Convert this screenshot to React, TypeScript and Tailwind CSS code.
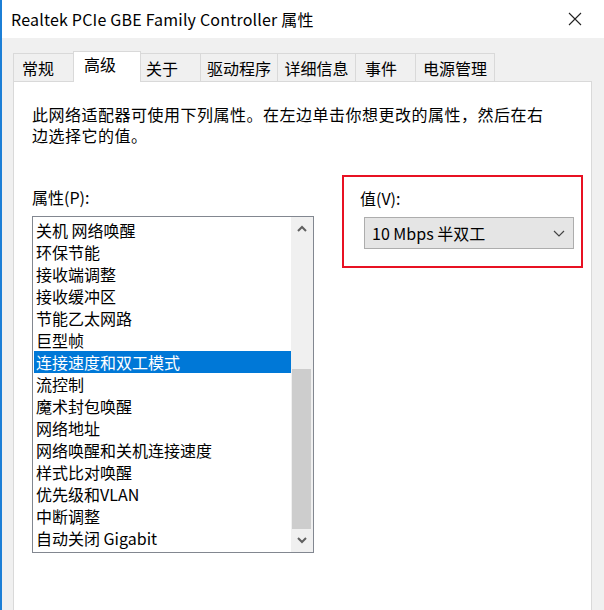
import React from "react";

const items = [
  "关机 网络唤醒",
  "环保节能",
  "接收端调整",
  "接收缓冲区",
  "节能乙太网路",
  "巨型帧",
  "连接速度和双工模式",
  "流控制",
  "魔术封包唤醒",
  "网络地址",
  "网络唤醒和关机连接速度",
  "样式比对唤醒",
  "优先级和VLAN",
  "中断调整",
  "自动关闭 Gigabit",
];

const tabs = [
  { label: "常规", cls: "w-[61px] justify-start pl-[8px]" },
  { label: "高级", cls: "w-[68px] justify-start pl-[10px]", active: true },
  { label: "关于", cls: "w-[61px] justify-start pl-[5px]" },
  { label: "驱动程序", cls: "w-[78px] justify-center" },
  { label: "详细信息", cls: "w-[79px] justify-center" },
  { label: "事件", cls: "w-[61px] justify-start pl-[9px]" },
  { label: "电源管理", cls: "w-[80px] justify-center" },
];

export default function App() {
  return (
    <div
      className="w-[604px] h-[610px] overflow-hidden bg-[#f0f0f0] border-l-2 border-[#1c7fd6] flex flex-col text-black"
      style={{ fontFamily: '"Noto Sans CJK SC", "Noto Sans", sans-serif' }}
    >
      {/* Title bar */}
      <div className="h-[38px] bg-white flex items-center justify-between pl-[9px] pr-[22px] shrink-0">
        <span className="text-[16px] leading-none tracking-[0.2px]">Realtek PCIe GBE Family Controller 属性</span>
        <svg width="14" height="14" viewBox="0 0 14 14">
          <path d="M1 1 L13 13 M13 1 L1 13" stroke="#222" strokeWidth="1.1" fill="none" />
        </svg>
      </div>

      {/* Body */}
      <div className="flex-1 flex flex-col pt-[13px] pl-[11px] pr-[12px]">
        {/* Tabs */}
        <div className="flex items-end h-[30px] relative z-10 shrink-0">
          {tabs.map((t, i) => (
            <div
              key={t.label}
              className={
                t.active
                  ? `${t.cls} h-[31px] -mb-px bg-white border border-b-0 border-[#d9d9d9] flex items-start pt-0 text-[16px] ${i > 0 ? "-ml-px" : ""}`
                  : `${t.cls} h-[28px] bg-[#f0f0f0] border border-b-0 border-[#d9d9d9] flex items-center text-[16px] ${i > 0 ? "-ml-px" : ""}`
              }
            >
              {t.label}
            </div>
          ))}
        </div>

        {/* Panel */}
        <div className="h-[560px] shrink-0 bg-white border border-[#d9d9d9] pl-[18px] pt-[22px]">
          <div className="flex flex-col text-[16px] tracking-[0.5px] whitespace-nowrap">
            <div className="h-[21px] leading-[21px]">此网络适配器可使用下列属性。在左边单击你想更改的属性，然后在右</div>
            <div className="h-[21px] leading-[21px]">边选择它的值。</div>
          </div>

          <div className="flex mt-[29px]">
            {/* Left column */}
            <div className="w-[282px] flex flex-col">
              <div className="mt-[12px] h-[21px] text-[16px] leading-[21px]">属性(P):</div>
              <div className="mt-[8px] h-[337px] border border-[#828790] flex">
                <div className="flex-1 pt-[2px] pl-px">
                  {items.map((it, i) => (
                    <div
                      key={it}
                      className={`h-[22px] leading-[22px] text-[16px] pl-[2px] whitespace-nowrap ${
                        i === 6 ? "bg-[#0078d7] text-white" : ""
                      }`}
                    >
                      {it}
                    </div>
                  ))}
                </div>
                {/* Scrollbar */}
                <div className="w-[22px] bg-[#f0f0f0] flex flex-col pl-px pr-[2px]">
                  <div className="h-[23px] flex items-center justify-center">
                    <svg width="10" height="7" viewBox="0 0 10 7">
                      <path d="M1 6 L5 2 L9 6" stroke="#606060" strokeWidth="2" fill="none" />
                    </svg>
                  </div>
                  <div className="h-[129px]" />
                  <div className="h-[160px] bg-[#cdcdcd]" />
                  <div className="flex-1 flex items-center justify-center">
                    <svg width="10" height="7" viewBox="0 0 10 7">
                      <path d="M1 1 L5 5 L9 1" stroke="#606060" strokeWidth="2" fill="none" />
                    </svg>
                  </div>
                </div>
              </div>
            </div>

            {/* Right column */}
            <div className="ml-[28px] w-[241px] h-[93px] border-2 border-[#e81123] flex flex-col pr-[7px]">
              <div className="mt-[11px] ml-[16px] h-[21px] text-[16px] leading-[21px]">值(V):</div>
              <div className="mt-[8px] ml-[20px] h-[32px] bg-[#e5e5e5] border border-[#adadad] flex items-center justify-between pl-[7px] pr-[8px]">
                <span className="text-[16px]">10 Mbps 半双工</span>
                <svg width="12" height="7" viewBox="0 0 12 7">
                  <path d="M1 1 L6 6 L11 1" stroke="#444" strokeWidth="1.2" fill="none" />
                </svg>
              </div>
            </div>
          </div>
        </div>
      </div>
    </div>
  );
}
